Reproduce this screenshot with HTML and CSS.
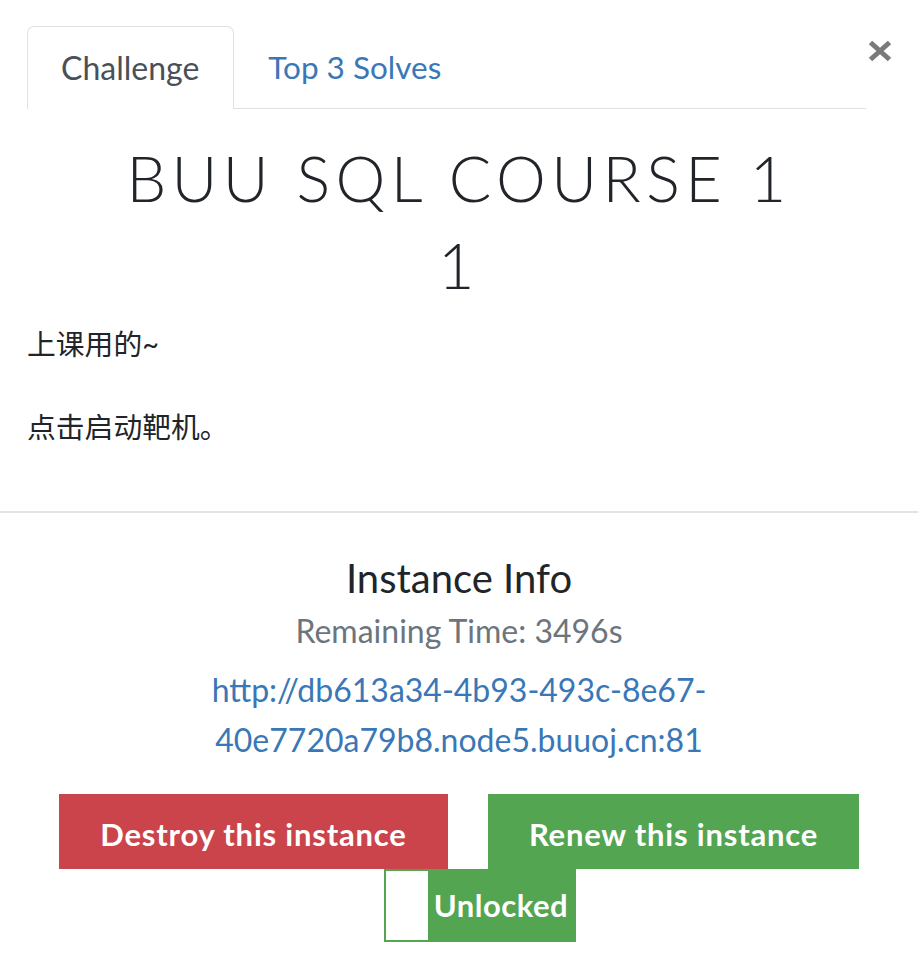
FILE: index.html
```html
<!DOCTYPE html>
<html lang="zh">
<head>
<meta charset="utf-8">
<title>Challenge</title>
<link rel="stylesheet" href="styles.css">
</head>
<body>
<div class="modal">
  <div class="header">
    <ul class="tabs">
      <li class="tab active">Challenge</li>
      <li class="tab link">Top 3 Solves</li>
    </ul>
    <button class="close" aria-label="Close">
      <svg width="24" height="22" viewBox="0 0 24 22"><path d="M2.5 2.5 L21.5 19.5 M21.5 2.5 L2.5 19.5" stroke="#7a7a7a" stroke-width="5" stroke-linecap="butt" fill="none"/></svg>
    </button>
  </div>
  <div class="content">
    <h2 class="name">BUU SQL COURSE 1</h2>
    <h2 class="name">1</h2>
    <p class="desc">上课用的~</p>
    <p class="desc">点击启动靶机。</p>
  </div>
  <hr class="divider">
  <div class="instance">
    <h4 class="inst-title">Instance Info</h4>
    <p class="remaining">Remaining Time: 3496s</p>
    <a class="inst-link" href="#">http://db613a34-4b93-493c-8e67-40e7720a79b8.node5.buuoj.cn:81</a>
    <div class="btns">
      <button class="btn danger">Destroy this instance</button>
      <button class="btn success">Renew this instance</button>
    </div>
    <div class="toggle">
      <span class="toggle-off"></span>
      <span class="toggle-on">Unlocked</span>
    </div>
  </div>
</div>
</body>
</html>
```
FILE: styles.css
```css
html, body {
  margin: 0;
  padding: 0;
  background: #fff;
}
body {
  font-family: Lato, "Noto Sans CJK SC", sans-serif;
  color: #212529;
  font-size: 28.8px;
  line-height: 1.5;
}
.modal {
  width: 918px;
}
.header {
  display: flex;
  align-items: flex-start;
  padding: 26px 26px 0 27px;
}
.tabs {
  list-style: none;
  margin: 0;
  padding: 0;
  display: flex;
  flex: 1;
  border-bottom: 1px solid #dee2e6;
}
.tab {
  padding: 19px 34px 19px 33px;
  font-size: 32px;
  line-height: 43px;
  border: 1px solid transparent;
  border-bottom: none;
  border-radius: 7px 7px 0 0;
  margin-bottom: -1px;
}
.tab.active {
  color: #495057;
  border-color: #dee2e6;
  padding-bottom: 20px;
  background: #fff;
}
.tab.link {
  color: #3a77b6;
  font-size: 31.5px;
  padding-left: 33px;
}
.close {
  border: 0;
  background: none;
  padding: 0;
  margin: 14px 0 0 2px;
  width: 24px;
  height: 22px;
  display: block;
}
.close svg { display: block; }
.content {
  padding: 25px 27px 0 27px;
}
.name {
  margin: 0;
  text-align: center;
  font-family: Lato, sans-serif;
  font-weight: 300;
  font-size: 63px;
  line-height: 87px;
  letter-spacing: 5.4px;
  color: #212529;
}
.desc {
  margin: 0 0 40px;
  line-height: 43px;
}
.desc:first-of-type { margin-top: 15px; }
.divider {
  border: 0;
  border-top: 2px solid #e3e3e3;
  margin: 62px 0 0;
}
.instance {
  text-align: center;
  padding-top: 41px;
}
.inst-title {
  margin: 0;
  font-weight: 400;
  font-size: 40px;
  line-height: 48px;
}
.remaining {
  margin: 4px 0 0;
  color: #6c757d;
  font-size: 32px;
  line-height: 50px;
}
.inst-link {
  display: block;
  width: 560px;
  margin: 9px auto 0;
  color: #3a77b6;
  text-decoration: none;
  font-size: 32px;
  line-height: 50px;
}
.btns {
  display: flex;
  justify-content: center;
  gap: 40px;
  margin-top: 29px;
}
.btn {
  border: 0;
  border-radius: 0;
  font-family: Lato, sans-serif;
  font-weight: 700;
  font-size: 31px;
  letter-spacing: 0.8px;
  color: #fff;
  height: 75px;
  padding: 4px 40px 0;
}
.danger { background: #cb444b; width: 389px; }
.success { background: #53a551; width: 371px; }
.toggle {
  display: inline-flex;
  border: 2px solid #53a551;
  height: 69px;
  width: 188px;
  margin-left: 42px;
  vertical-align: top;
}
.toggle-off {
  width: 42px;
  background: #fff;
}
.toggle-on {
  flex: 1;
  background: #53a551;
  color: #fff;
  font-weight: 700;
  font-size: 31px;
  letter-spacing: 0.5px;
  line-height: 69px;
  text-align: center;
}
```
